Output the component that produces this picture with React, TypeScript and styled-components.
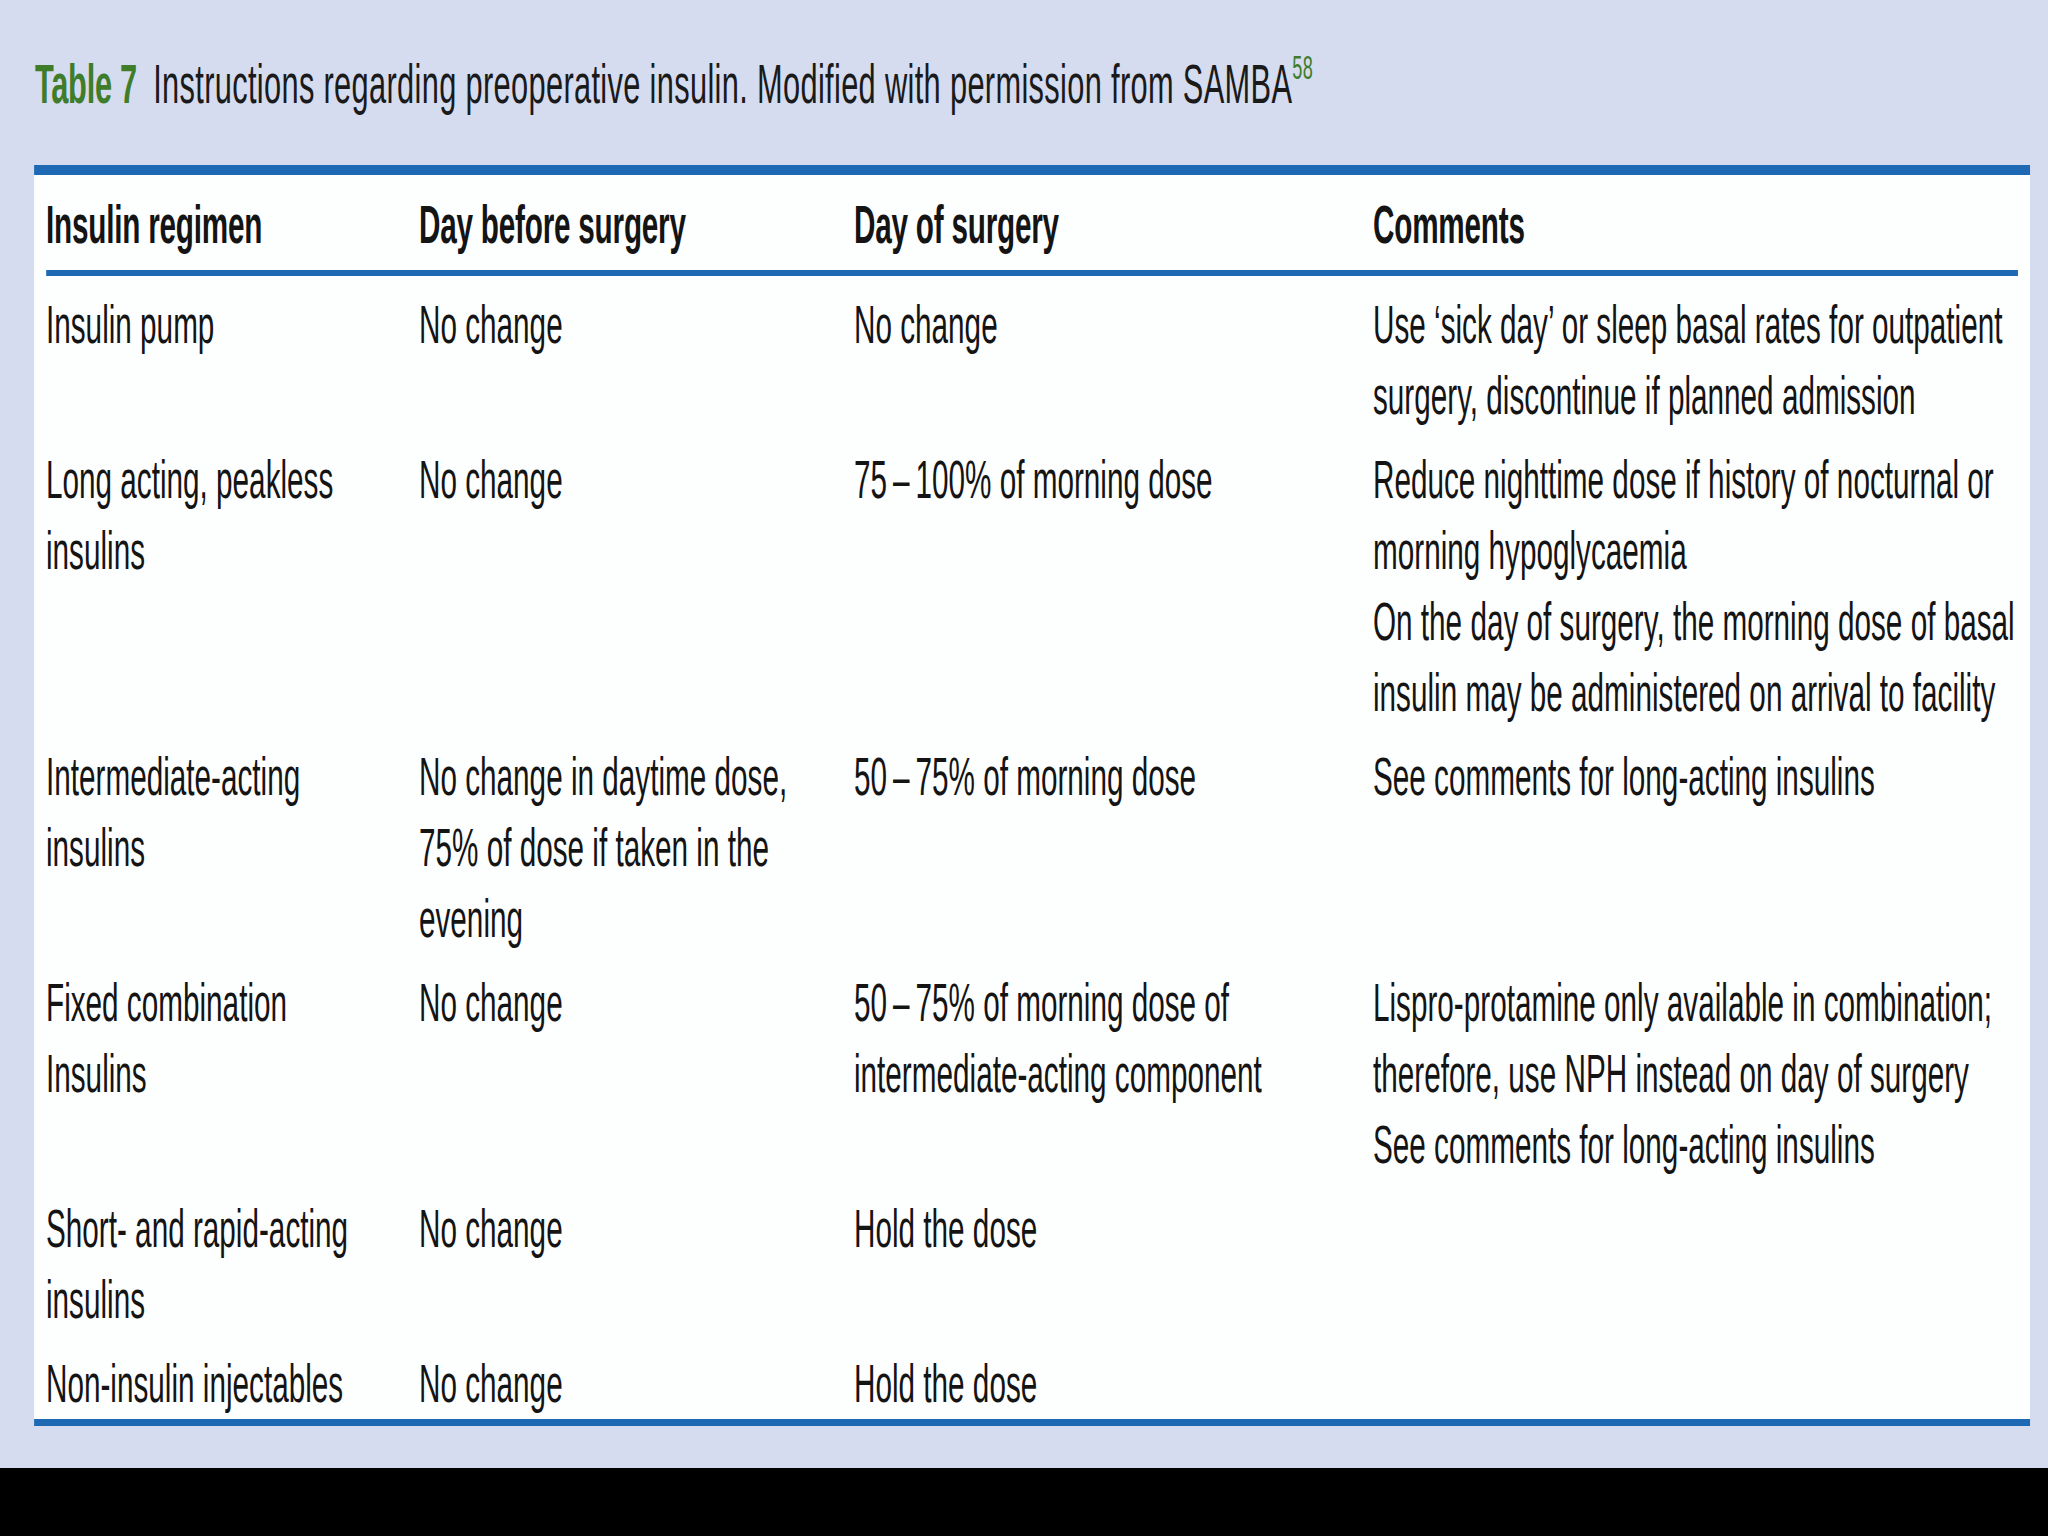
import React from 'react';
import styled, { createGlobalStyle } from 'styled-components';

// the source picture is squeezed sideways, so the whole sheet is laid out wide and scaled back
const SQUEEZE = 0.55;
const wide = (px: number) => `${(px / SQUEEZE).toFixed(2)}px`;

const BLUE = '#1d69b4';
const COLUMNS = [373, 435, 519];

type Row = {
  regimen: string[];
  before: string[];
  day: string[];
  comments: string[];
};

const rows: Row[] = [
  {
    regimen: ['Insulin pump'],
    before: ['No change'],
    day: ['No change'],
    comments: ['Use ‘sick day’ or sleep basal rates for outpatient', 'surgery, discontinue if planned admission'],
  },
  {
    regimen: ['Long acting, peakless', 'insulins'],
    before: ['No change'],
    day: ['75\u2009–\u2009100% of morning dose'],
    comments: [
      'Reduce nighttime dose if history of nocturnal or',
      'morning hypoglycaemia',
      'On the day of surgery, the morning dose of basal',
      'insulin may be administered on arrival to facility',
    ],
  },
  {
    regimen: ['Intermediate-acting', 'insulins'],
    before: ['No change in daytime dose,', '75% of dose if taken in the', 'evening'],
    day: ['50\u2009–\u200975% of morning dose'],
    comments: ['See comments for long-acting insulins'],
  },
  {
    regimen: ['Fixed combination', 'Insulins'],
    before: ['No change'],
    day: ['50\u2009–\u200975% of morning dose of', 'intermediate-acting component'],
    comments: [
      'Lispro-protamine only available in combination;',
      'therefore, use NPH instead on day of surgery',
      'See comments for long-acting insulins',
    ],
  },
  {
    regimen: ['Short- and rapid-acting', 'insulins'],
    before: ['No change'],
    day: ['Hold the dose'],
    comments: [],
  },
  {
    regimen: ['Non-insulin injectables'],
    before: ['No change'],
    day: ['Hold the dose'],
    comments: [],
  },
];

const headings = ['Insulin regimen', 'Day before surgery', 'Day of surgery', 'Comments'];

function Cell({ lines }: { lines: string[] }) {
  return (
    <div>
      {lines.map((line) => (
        <Line key={line}>{line}</Line>
      ))}
    </div>
  );
}

export default function App() {
  return (
    <>
      <GlobalStyle />
      <Page>
        <Sheet>
          <Caption>
            <Label>Table 7 </Label>
            Instructions regarding preoperative insulin. Modified with permission from SAMBA
            <Ref>58</Ref>
          </Caption>
          <Table>
            <HeadRow>
              {headings.map((h) => (
                <HeadCell key={h}>{h}</HeadCell>
              ))}
            </HeadRow>
            <Body>
              {rows.map((row) => (
                <BodyRow key={row.regimen.join(' ')}>
                  <Cell lines={row.regimen} />
                  <Cell lines={row.before} />
                  <Cell lines={row.day} />
                  <Cell lines={row.comments} />
                </BodyRow>
              ))}
            </Body>
          </Table>
        </Sheet>
      </Page>
      <Footer />
    </>
  );
}

const GlobalStyle = createGlobalStyle`
  html, body {
    margin: 0;
    padding: 0;
    overflow: hidden;
    background: #000;
  }
`;

const Page = styled.div`
  width: 2048px;
  height: 1468px;
  overflow: hidden;
  background: #d5dcf0;
`;

const Sheet = styled.div`
  width: ${wide(2048)};
  padding-top: 52px;
  transform: scaleX(${SQUEEZE});
  transform-origin: 0 0;
  font-family: 'Liberation Sans', Arial, sans-serif;
  color: #141414;
`;

const Caption = styled.div`
  margin-left: ${wide(35)};
  font-size: 56px;
  line-height: 64px;
  letter-spacing: 0.6px;
  white-space: nowrap;
  color: #1a1a1a;
`;

const Label = styled.span`
  font-weight: bold;
  letter-spacing: -0.5px;
  color: #3f7d2a;
  margin-right: ${wide(8)};
`;

const Ref = styled.span`
  font-size: 33px;
  line-height: 0;
  vertical-align: 24px;
  color: #3f7d2a;
`;

const Table = styled.div`
  margin: 49px 0 0 ${wide(34)};
  width: ${wide(1996)};
  box-sizing: border-box;
  padding: 0 ${wide(12)};
  background: #fdfefe;
  border-top: 10px solid ${BLUE};
  border-bottom: 7px solid ${BLUE};
`;

const grid = `
  display: grid;
  grid-template-columns: ${COLUMNS.map(wide).join(' ')} 1fr;
`;

const HeadRow = styled.div`
  ${grid}
  padding: 14px 0 10px;
  border-bottom: 6px solid ${BLUE};
`;

const HeadCell = styled.div`
  font-size: 54px;
  line-height: 71px;
  font-weight: bold;
  letter-spacing: -0.4px;
  white-space: nowrap;
`;

const Body = styled.div`
  padding-top: 7px;
`;

const BodyRow = styled.div`
  ${grid}
  padding: 6px 0 7px;

  &:last-child {
    padding-bottom: 0;
  }
`;

const Line = styled.div`
  font-size: 54px;
  line-height: 71px;
  white-space: nowrap;
`;

const Footer = styled.div`
  height: 68px;
  background: #000;
`;
